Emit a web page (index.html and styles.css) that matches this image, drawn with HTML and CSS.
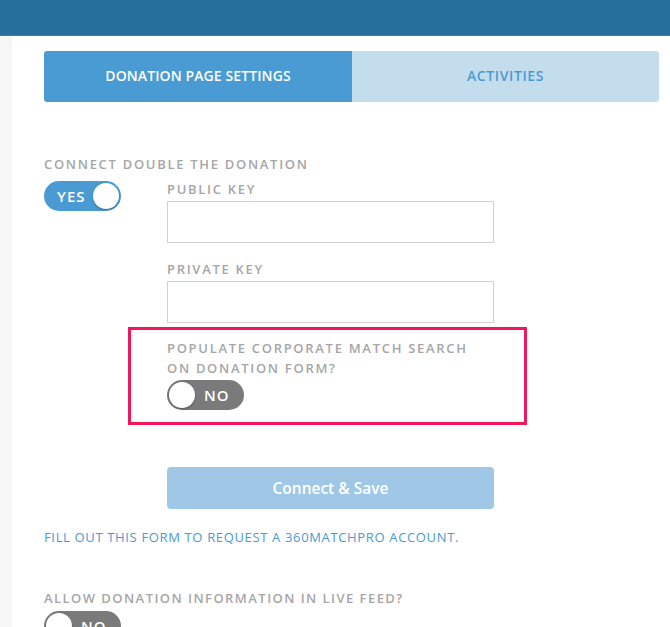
FILE: index.html
```html
<!DOCTYPE html>
<html>
<head>
<meta charset="utf-8">
<link rel="stylesheet" href="styles.css">
</head>
<body>
<div class="topbar"></div>
<div class="page">
  <div class="sidebar"></div>
  <div class="content">
    <div class="tabs">
      <div class="tab active">DONATION PAGE SETTINGS</div>
      <div class="tab">ACTIVITIES</div>
    </div>
    <div class="label first">CONNECT DOUBLE THE DONATION</div>
    <div class="row">
      <div class="toggle on"><span class="ttext">YES</span><span class="knob"></span></div>
      <div class="keys">
        <div class="label small">PUBLIC KEY</div>
        <div class="input"></div>
        <div class="label small second">PRIVATE KEY</div>
        <div class="input"></div>
        <div class="highlight">
          <div class="label two">POPULATE CORPORATE MATCH SEARCH<br>ON DONATION FORM?</div>
          <div class="toggle off"><span class="knob"></span><span class="ttext">NO</span></div>
        </div>
        <div class="button">Connect &amp; Save</div>
      </div>
    </div>
    <div class="link">FILL OUT THIS FORM TO REQUEST A 360MATCHPRO ACCOUNT.</div>
    <div class="label feed">ALLOW DONATION INFORMATION IN LIVE FEED?</div>
    <div class="toggle off"><span class="knob"></span><span class="ttext">NO</span></div>
  </div>
</div>
</body>
</html>
```
FILE: styles.css
```css
* { box-sizing: border-box; }
html, body { margin: 0; padding: 0; background: #fff; overflow: hidden; height: 627px; }
body { font-family: "Open Sans", "Liberation Sans", sans-serif; }
.topbar { height: 36px; background: #276f9b; border-bottom: 1px solid #3b80ab; }
.page { display: flex; height: 591px; }
.sidebar { width: 12px; background: #f6f6f7; flex: none; }
.content { flex: 1; padding: 15px 11px 0 32px; }
.tabs { display: flex; height: 51px; border-radius: 3px; overflow: hidden; }
.tab { display: flex; align-items: center; justify-content: center; font-size: 14px; font-weight: 600; letter-spacing: 0.1px; padding-bottom: 2px; }
.tab.active { width: 308px; background: #4a9bd3; color: #fff; }
.tab:not(.active) { flex: 1; background: #c4ddec; color: #4a9bd3; letter-spacing: 0.6px; }
.label { color: #a6a6a6; font-size: 13px; font-weight: 600; letter-spacing: 1.7px; line-height: 20px; }
.label.first { margin-top: 52px; }
.row { display: flex; margin-top: 7px; }
.toggle { width: 77px; height: 30px; border-radius: 15px; display: flex; align-items: center; padding: 0 2px; color: #fff; font-size: 15px; font-weight: 600; letter-spacing: 1px; }
.toggle.on { background: #4a9bd3; justify-content: space-between; padding-left: 13px; }
.toggle.off { background: #7a7a7a; gap: 9px; }
.knob { width: 26px; height: 26px; border-radius: 50%; background: #fff; box-shadow: 0 1px 2px rgba(0,0,0,0.3); }
.keys { margin-left: 46px; width: 327px; }
.label.small { line-height: 18px; margin-top: -1px; }
.label.second { margin-top: 17px; }
.input { height: 42px; border: 1px solid #d2d2d2; margin-top: 3px; }
.highlight { margin: 4px 0 0 -39px; width: 399px; height: 98px; border: 3px solid #f2175a; padding: 8px 0 0 36px; }
.label.two { line-height: 20px; }
.highlight .toggle { margin-top: 2px; }
.button { margin-top: 42px; height: 42px; border-radius: 4px; background: #a0c8e6; color: #fff; display: flex; align-items: center; justify-content: center; font-size: 15.5px; font-weight: 600; }
.link { margin-top: 18px; color: #4a9bd3; font-size: 13px; letter-spacing: 0.65px; line-height: 20px; }
.label.feed { margin-top: 41px; letter-spacing: 1.45px; }
.content > .toggle.off { margin-top: 3px; }
```
